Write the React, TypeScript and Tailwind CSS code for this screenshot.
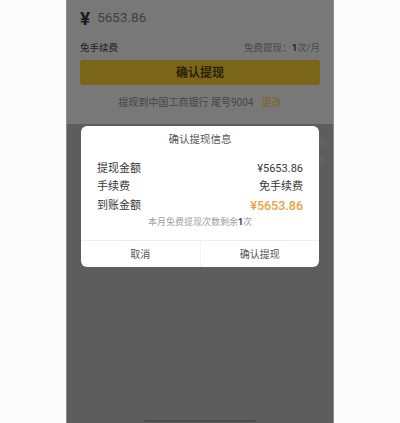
import React from "react";

const FONT = { fontFamily: '"Roboto", "Noto Sans CJK SC", "Noto Sans", sans-serif' };

function InfoRow({
  label,
  value,
  highlight = false,
}: {
  label: string;
  value: string;
  highlight?: boolean;
}) {
  return (
    <div className={`flex items-center justify-between px-[16px] ${highlight ? "h-[20px]" : "h-[18px]"}`}>
      <span className="text-[11px] text-[#383838]">{label}</span>
      <span
        className={
          highlight
            ? "text-[12.5px] font-medium text-[#e9a23b]"
            : "text-[11px] text-[#383838]"
        }
      >
        {value}
      </span>
    </div>
  );
}

function ConfirmDialog() {
  return (
    <div className="absolute left-[14px] right-[14px] top-[126px] h-[141px] rounded-[6px] bg-white flex flex-col">
      <div className="h-[27px] flex items-center justify-center text-[10.5px] text-[#555555]">
        确认提现信息
      </div>
      <div className="h-[7px]" />
      <InfoRow label="提现金额" value="¥5653.86" />
      <InfoRow label="手续费" value="免手续费" />
      <InfoRow label="到账金额" value="¥5653.86" highlight />
      <div className="h-[14px] flex items-center justify-center text-[9px] text-[#a0a0a0]">
        本月免费提现次数剩余<span className="font-bold text-[#333333]">1</span>次
      </div>
      <div className="flex-1" />
      <div className="h-[27px] flex border-t border-[#efefef]">
        <button className="flex-1 flex items-center justify-center text-[10px] text-[#555555] border-r border-[#f3f3f3]">
          取消
        </button>
        <button className="flex-1 flex items-center justify-center text-[10px] text-[#555555]">
          确认提现
        </button>
      </div>
    </div>
  );
}

export default function App() {
  return (
    <div className="w-[400px] h-[423px] bg-[#fbfbfb] flex justify-center" style={FONT}>
      <div className="relative w-[268px] h-full bg-[#5d5d5d] border-x border-[#8e8e8e] overflow-hidden">
        {/* dimmed withdraw form */}
        <div className="h-[124px] bg-[#787878] px-[13px] flex flex-col">
          <div className="h-[36px] flex items-center gap-[7px]">
            <span className="text-[19px] font-bold leading-none text-[#1c1c1c]">¥</span>
            <span className="text-[13.5px] leading-none text-[#404040]">5653.86</span>
          </div>
          <div className="h-[24px] flex items-center justify-between">
            <span className="text-[9.5px] text-[#1e1e1e]">免手续费</span>
            <span className="text-[9.5px] text-[#484848]">
              免费提现：<span className="font-bold text-[#1e1e1e]">1</span>次/月
            </span>
          </div>
          <div className="h-[25px] rounded-[3px] bg-[#7b6519] flex items-center justify-center text-[12px] font-bold text-[#2a2309]">
            确认提现
          </div>
          <div className="h-[34px] flex items-center justify-center gap-[8px] text-[10px]">
            <span className="text-[#464646]">提现到中国工商银行 尾号9004</span>
            <span className="text-[#7e671a]">更改</span>
          </div>
        </div>

        {/* list behind the dialog */}
        <div className="px-[7px] pt-[10px] flex flex-col">
          <div className="h-[18px] flex items-center justify-end text-[9px] text-[#6a6a6a]">明</div>
          <div className="h-[18px] flex items-center justify-end text-[9px] text-[#6a6a6a]">出</div>
        </div>

        <ConfirmDialog />

        <div className="absolute bottom-[1px] left-[77px] w-[112px] h-[2px] rounded-full bg-[#4c4c4c]" />
      </div>
    </div>
  );
}
